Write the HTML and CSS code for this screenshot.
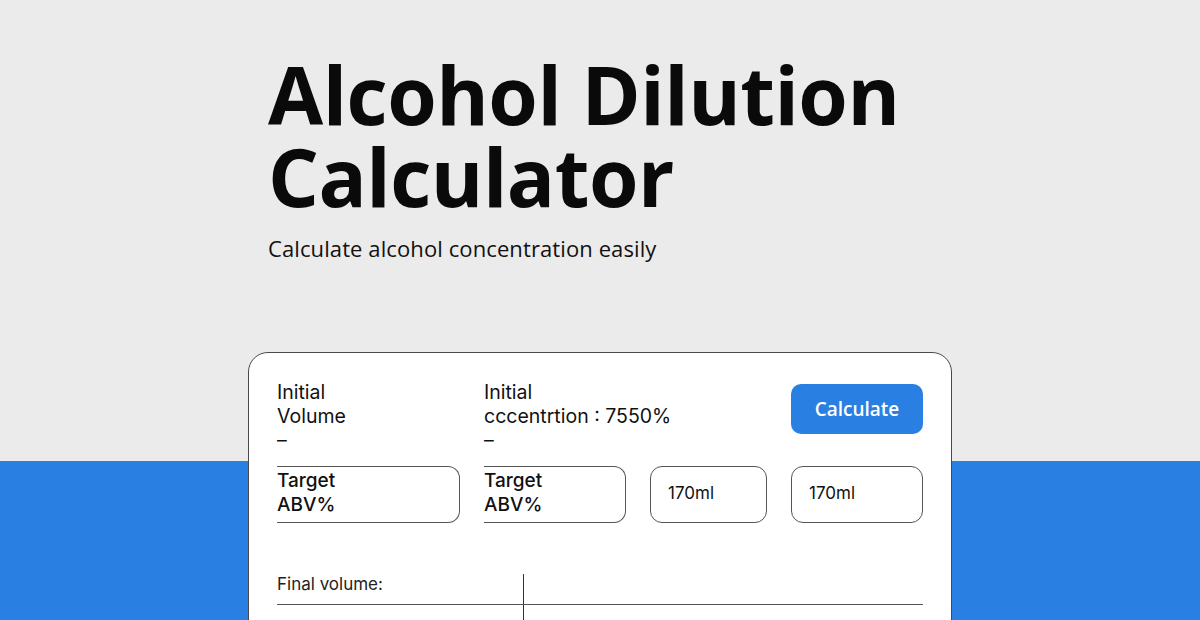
FILE: index.html
```html
<!DOCTYPE html>
<html lang="en">
<head>
<meta charset="utf-8">
<title>Alcohol Dilution Calculator</title>
<link rel="stylesheet" href="styles.css">
</head>
<body>
<main class="page">
  <header class="hero">
    <h1 class="title"><span class="title-line">Alcohol Dilution</span><span class="title-line">Calculator</span></h1>
    <p class="subtitle">Calculate alcohol concentration easily</p>
  </header>
  <section class="card">
    <div class="grid">
      <div class="field">
        <span>Initial</span>
        <span>Volume</span>
        <span>–</span>
      </div>
      <div class="field field-wide">
        <span>Initial</span>
        <span>cccentrtion : 7550%</span>
        <span>–</span>
      </div>
      <button class="calc-btn" type="button">Calculate</button>

      <div class="box box-open">
        <span>Target</span>
        <span>ABV%</span>
      </div>
      <div class="box box-open">
        <span>Target</span>
        <span>ABV%</span>
      </div>
      <div class="box box-value">170ml</div>
      <div class="box box-value">170ml</div>
    </div>

    <div class="result">
      <div class="result-label">Final volume:</div>
      <div class="result-cell result-cell-top"></div>
      <div class="result-value"></div>
      <div class="result-cell"></div>
    </div>
  </section>
</main>
</body>
</html>
```

FILE: styles.css
```css
* {
  box-sizing: border-box;
}

html, body {
  margin: 0;
  height: 100%;
  overflow: hidden;
}

body {
  font-family: "Open Sans", "Liberation Sans", sans-serif;
  color: #111;
  background: linear-gradient(#ebebeb 0, #ebebeb 461px, #2a7fe3 461px, #2a7fe3 100%);
}

.page {
  width: 1200px;
  height: 620px;
  display: flex;
  flex-direction: column;
}

.hero {
  flex-shrink: 0;
  padding: 53px 0 0 268px;
  height: 264px;
}

.title {
  margin: 0;
  font-family: "Open Sans", sans-serif;
  font-weight: 700;
  font-size: 80px;
  line-height: 82px;
  letter-spacing: -0.5px;
  color: #0a0a0a;
}

.title-line {
  display: block;
}

.subtitle {
  margin: 16px 0 0 0;
  font-size: 22px;
  line-height: 30px;
  color: #111;
  letter-spacing: 0.1px;
}

.card {
  flex-shrink: 0;
  margin: 88px 0 0 248px;
  width: 704px;
  height: 320px;
  background: #fff;
  border: 1.5px solid #4a4a4a;
  border-radius: 20px;
  padding: 27px 28px 0 28px;
  font-family: "Inter", "Liberation Sans", sans-serif;
}

.grid {
  display: grid;
  grid-template-columns: 183px 142px 117px 132px;
  justify-content: space-between;
  row-gap: 14px;
}

.field {
  display: flex;
  flex-direction: column;
  font-size: 19.5px;
  line-height: 24px;
  color: #111;
}

.field-wide {
  grid-column: span 2;
}

.calc-btn {
  justify-self: stretch;
  height: 50px;
  margin-top: 4px;
  border: none;
  border-radius: 10px;
  background: #2a7fe3;
  color: #fff;
  font-family: "Open Sans", sans-serif;
  font-weight: 600;
  font-size: 19px;
  cursor: pointer;
}

.box {
  height: 57px;
  border: 1.5px solid #555;
  border-radius: 12px;
  font-size: 19px;
  line-height: 24px;
  color: #111;
}

.box-open {
  display: flex;
  flex-direction: column;
  padding: 2px 0 0 0;
  border-left: none;
  border-top-left-radius: 0;
  border-bottom-left-radius: 0;
  font-weight: 500;
}

.box-value {
  display: flex;
  align-items: center;
  padding: 0 0 4px 17px;
  font-size: 17px;
}

.result {
  margin-top: 51px;
  display: grid;
  grid-template-columns: 246px 1fr;
  grid-template-rows: 31px 40px;
}

.result-label {
  font-size: 17px;
  line-height: 20px;
  color: #222;
  border-bottom: 1.5px solid #555;
}

.result-cell {
  border-left: 1.5px solid #333;
}

.result-cell-top {
  border-bottom: 1.5px solid #555;
}
```
